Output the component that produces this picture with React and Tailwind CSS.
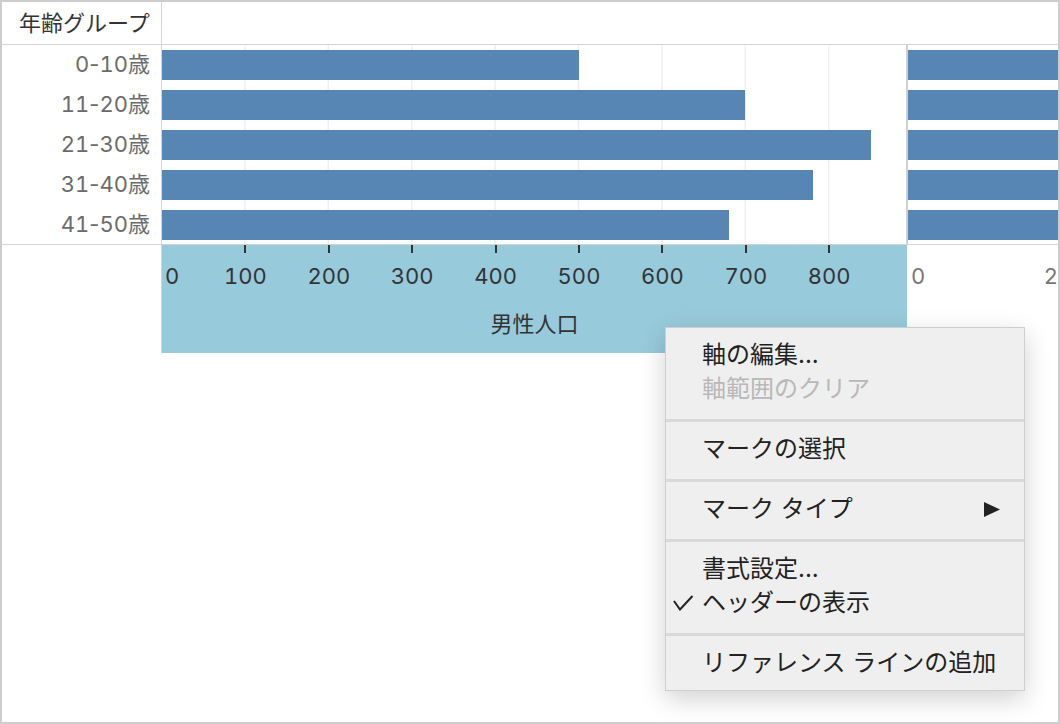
import React from 'react';

const FONT = { fontFamily: 'Inter, "Noto Sans CJK JP", sans-serif' };

const rows = [
  { label: '0-10歳', value: 500 },
  { label: '11-20歳', value: 699 },
  { label: '21-30歳', value: 850 },
  { label: '31-40歳', value: 780 },
  { label: '41-50歳', value: 680 },
];

// px per unit on the male axis
const SCALE = 0.834;
const ticks = [0, 100, 200, 300, 400, 500, 600, 700, 800];

// tabular digits, but keep the hyphen narrow
function AgeLabel({ text }) {
  const [a, b] = text.split('-');
  return (
    <span>
      <span className="tabular-nums">{a}</span>
      <span className="normal-nums">-</span>
      <span className="tabular-nums">{b}</span>
    </span>
  );
}

function MenuGroup({ children, last }) {
  return (
    <div className={last ? 'pt-[10px] pb-[10px]' : 'pt-[10px] pb-[13px] border-b-[3px] border-[#d9d9d9]'}>
      {children}
    </div>
  );
}

function MenuItem({ children, disabled, check, arrow }) {
  return (
    <div className={`relative flex items-center h-[34px] pl-[36px] pr-[24px] ${disabled ? 'text-[#b8b8b8]' : 'text-[#222]'}`}>
      {check && (
        <svg className="absolute left-[7px] top-[9px]" width="21" height="16" viewBox="0 0 21 16">
          <polyline points="1,6 7,14.5 19.5,1" fill="none" stroke="#222" strokeWidth="2" />
        </svg>
      )}
      <span className="flex-1">{children}</span>
      {arrow && (
        <svg width="16" height="15" viewBox="0 0 16 15">
          <polygon points="0,0 16,7.5 0,15" fill="#222" />
        </svg>
      )}
    </div>
  );
}

export default function App() {
  return (
    <div style={FONT} className="w-[1060px] h-[724px] border-2 border-[#cdcdcd] bg-white relative overflow-hidden">
      {/* header */}
      <div className="flex h-[43px] border-b border-[#d4d4d4]">
        <div className="w-[160px] border-r border-[#d4d4d4] pl-[17px] flex items-center text-[22px] text-[#333]">
          年齢グループ
        </div>
        <div className="flex-1" />
      </div>

      {/* bars */}
      <div className="flex h-[200px] border-b border-[#d4d4d4]">
        <div className="w-[160px] border-r border-[#d4d4d4] flex flex-col">
          {rows.map(r => (
            <div key={r.label} className="h-[40px] flex items-center justify-end pr-[11px] text-[22px] text-[#6b6b6b]">
              <AgeLabel text={r.label} />
            </div>
          ))}
        </div>
        <div className="w-[744px] relative">
          <svg className="absolute inset-0" width="744" height="199">
            {ticks.slice(1).map(t => (
              <line key={t} x1={t * SCALE - 0.5} x2={t * SCALE - 0.5} y1="0" y2="199" stroke="#efefef" strokeWidth="1.5" />
            ))}
          </svg>
          <div className="relative flex flex-col gap-[10px] pt-[5px]">
            {rows.map(r => (
              <div key={r.label} className="h-[30px] bg-[#5786b4]" style={{ width: r.value * SCALE }} />
            ))}
          </div>
        </div>
        <div className="w-[2px] bg-[#d0d0d0]" />
        <div className="flex-1 flex flex-col gap-[10px] pt-[5px]">
          {rows.map(r => (
            <div key={r.label} className="h-[30px] bg-[#5786b4]" />
          ))}
        </div>
      </div>

      {/* axis */}
      <div className="flex h-[108px] tabular-nums">
        <div className="w-[160px] border-r border-[#d4d4d4]" />
        <div className="w-[745px] bg-[#97cadb] relative text-[#333]">
          {ticks.slice(1).map(t => (
            <div key={t} className="absolute top-0 w-[2px] h-[8px] bg-[#333]" style={{ left: t * SCALE - 1 }} />
          ))}
          {ticks.map(t => (
            <div
              key={t}
              className="absolute top-[17px] leading-[28px] text-[22px]"
              style={t === 0 ? { left: 3 } : { left: t * SCALE, transform: 'translateX(-50%)' }}
            >
              {t}
            </div>
          ))}
          <div className="pt-[65px] leading-[28px] text-[22px] text-center">男性人口</div>
        </div>
        <div className="flex-1 flex justify-between pl-[4px] pt-[17px] leading-[28px] text-[22px] text-[#777] overflow-hidden">
          <span>0</span>
          <span>2</span>
        </div>
      </div>

      {/* context menu */}
      <div className="absolute left-[663px] top-[325px] w-[360px] bg-[#efefef] border border-[#cfcfcf] shadow-[0_8px_24px_rgba(0,0,0,0.18)] text-[24px]">
        <MenuGroup>
          <MenuItem>軸の編集...</MenuItem>
          <MenuItem disabled>軸範囲のクリア</MenuItem>
        </MenuGroup>
        <MenuGroup>
          <MenuItem>マークの選択</MenuItem>
        </MenuGroup>
        <MenuGroup>
          <MenuItem arrow>マーク タイプ</MenuItem>
        </MenuGroup>
        <MenuGroup>
          <MenuItem>書式設定...</MenuItem>
          <MenuItem check>ヘッダーの表示</MenuItem>
        </MenuGroup>
        <MenuGroup last>
          <MenuItem>リファレンス ラインの追加</MenuItem>
        </MenuGroup>
      </div>
    </div>
  );
}
